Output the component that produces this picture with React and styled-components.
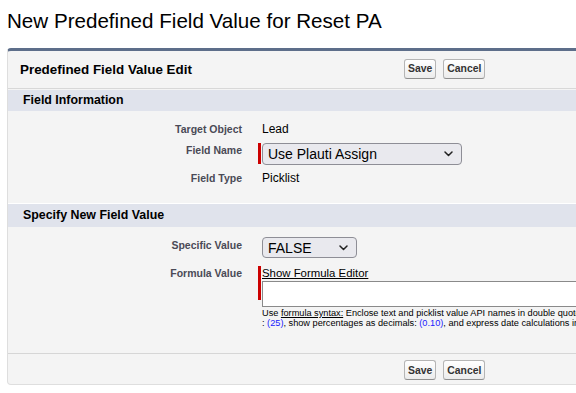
import React from "react";
import styled, { createGlobalStyle } from "styled-components";

const GlobalStyle = createGlobalStyle`
  html, body { margin: 0; padding: 0; background: #fff; overflow: hidden; }
  body { font-family: "Liberation Sans", Arial, sans-serif; color: #000; }
`;

const Page = styled.div`
  padding-left: 7px;
`;

const Title = styled.h1`
  margin: 0 0 14px;
  padding-top: 8px;
  font-size: 20.6px;
  line-height: 26px;
  font-weight: normal;
  white-space: nowrap;
`;

const Panel = styled.div`
  width: 900px;
  background: #f4f4f4;
  border: 1px solid #dedede;
  border-top: 3px solid #5d6e8a;
  border-radius: 4px;
`;

const PanelHeader = styled.div`
  display: grid;
  grid-template-columns: 396px auto;
  align-items: center;
  height: 37px;
  border-bottom: 1px solid #d8d8d8;
  margin-bottom: 1px;
`;

const PanelTitle = styled.h2`
  margin: 0;
  padding-left: 12px;
  font-size: 13.4px;
  font-weight: bold;
  color: #000;
`;

const ButtonGroup = styled.div`
  display: flex;
  gap: 7px;
  margin-top: -2px;
`;

const Btn = styled.button`
  font-family: "Liberation Sans", Arial, sans-serif;
  font-size: 10.4px;
  font-weight: bold;
  color: #333;
  height: 20px;
  padding: 0 3px;
  border: 1px solid #b5b5b5;
  border-bottom-color: #8f8f8f;
  border-radius: 3px;
  background: linear-gradient(#ffffff, #ececec);
`;

const SectionHeader = styled.h3`
  margin: 0;
  height: ${(p) => p.$h}px;
  line-height: ${(p) => p.$h}px;
  padding-left: 15px;
  background: #e0e3ec;
  font-size: 12.4px;
  font-weight: bold;
  border-top: ${(p) => (p.$topLine ? "1px solid #ffffff" : "none")};
`;

const SectionBody = styled.div`
  display: flex;
  flex-direction: column;
  padding: ${(p) => p.$pad};
`;

const FieldRow = styled.div`
  display: grid;
  grid-template-columns: 250px 1fr;
  align-items: start;
  margin-top: ${(p) => p.$mt || 0}px;
`;

const Label = styled.div`
  text-align: right;
  padding-right: 16px;
  font-size: 10.5px;
  font-weight: bold;
  color: #4a4a56;
  line-height: ${(p) => p.$lh}px;
`;

const Value = styled.div`
  display: flex;
  align-items: flex-start;
`;

const RequiredBar = styled.div`
  width: 3px;
  height: ${(p) => p.$h}px;
  background: #c00;
  margin-right: 1px;
  flex: none;
`;

const Spacer = styled.div`
  width: 4px;
  flex: none;
`;

const Text = styled.div`
  font-size: 12px;
  line-height: ${(p) => p.$lh}px;
`;

const SelectBox = styled.div`
  display: flex;
  align-items: center;
  justify-content: space-between;
  box-sizing: border-box;
  width: ${(p) => p.$w}px;
  height: ${(p) => p.$h}px;
  padding: 0 8px 0 5px;
  border: 1px solid #8e8e96;
  border-radius: 4px;
  background: #e9e9ee;
  font-size: 14px;
  color: #000;
`;

const FormulaCol = styled.div`
  display: flex;
  flex-direction: column;
`;

const LinkText = styled.a`
  font-size: 11.4px;
  line-height: 15px;
  color: #000;
  text-decoration: underline;
`;

const TextArea = styled.div`
  box-sizing: border-box;
  width: 700px;
  height: 26px;
  background: #fff;
  border: 1px solid #8a8a8a;
`;

const Help = styled.div`
  font-size: 9.2px;
  line-height: 10px;
  margin-top: 1px;
  white-space: nowrap;
  color: #000;
`;

const HelpLink = styled.span`
  text-decoration: underline;
`;

const Example = styled.span`
  color: #1a1aff;
`;

const Footer = styled.div`
  border-top: 1px solid #d6d6d6;
  height: 31px;
  padding-left: 396px;
  padding-top: 8px;
  box-sizing: border-box;
`;

const Chevron = () => (
  <svg width="9" height="6" viewBox="0 0 9 6" fill="none">
    <path d="M1 1l3.5 3.5L8 1" stroke="#222" strokeWidth="1.5" strokeLinecap="round" strokeLinejoin="round" />
  </svg>
);

const Select = ({ w, h, children }) => (
  <SelectBox $w={w} $h={h}>
    <span>{children}</span>
    <Chevron />
  </SelectBox>
);

export default function App() {
  return (
    <>
      <GlobalStyle />
      <Page>
        <Title>New Predefined Field Value for Reset PA</Title>
        <Panel>
          <PanelHeader>
            <PanelTitle>Predefined Field Value Edit</PanelTitle>
            <ButtonGroup>
              <Btn>Save</Btn>
              <Btn>Cancel</Btn>
            </ButtonGroup>
          </PanelHeader>

          <SectionHeader $h={21}>Field Information</SectionHeader>
          <SectionBody $pad="8px 0 16px">
            <FieldRow>
              <Label $lh={20}>Target Object</Label>
              <Value>
                <Spacer />
                <Text $lh={20}>Lead</Text>
              </Value>
            </FieldRow>
            <FieldRow $mt={4}>
              <Label $lh={14}>Field Name</Label>
              <Value>
                <RequiredBar $h={21} />
                <Select w={200} h={22}>Use Plauti Assign</Select>
              </Value>
            </FieldRow>
            <FieldRow $mt={4}>
              <Label $lh={18}>Field Type</Label>
              <Value>
                <Spacer />
                <Text $lh={18}>Picklist</Text>
              </Value>
            </FieldRow>
          </SectionBody>

          <SectionHeader $h={23} $topLine>Specify New Field Value</SectionHeader>
          <SectionBody $pad="10px 0 25px">
            <FieldRow>
              <Label $lh={16}>Specific Value</Label>
              <Value>
                <Spacer />
                <Select w={95} h={21}>FALSE</Select>
              </Value>
            </FieldRow>
            <FieldRow $mt={8}>
              <Label $lh={14}>Formula Value</Label>
              <Value>
                <RequiredBar $h={34} />
                <FormulaCol>
                  <LinkText href="#">Show Formula Editor</LinkText>
                  <TextArea />
                  <Help>
                    Use <HelpLink>formula syntax:</HelpLink> Enclose text and picklist value API names in double quotes : <Example>("the text")</Example>, include numbers without quotes
                    <br />: <Example>(25)</Example>, show percentages as decimals: <Example>(0.10)</Example>, and express date calculations in the standard format: <Example>(Today() + 7)</Example>
                  </Help>
                </FormulaCol>
              </Value>
            </FieldRow>
          </SectionBody>

          <Footer>
            <ButtonGroup>
              <Btn>Save</Btn>
              <Btn>Cancel</Btn>
            </ButtonGroup>
          </Footer>
        </Panel>
      </Page>
    </>
  );
}
